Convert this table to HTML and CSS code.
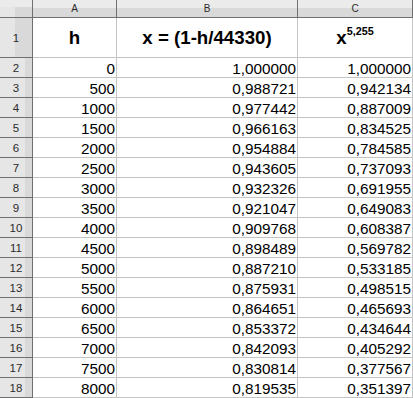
FILE: index.html
```html
<!DOCTYPE html>
<html lang="en">
<head>
  <meta charset="UTF-8" />
  <title>Barometric formula</title>
  <link rel="stylesheet" href="styles.css">
</head>
<body>
  <div class="sheet">
    <div class="corner"></div>
    <div class="col-head">A</div>
    <div class="col-head">B</div>
    <div class="col-head">C</div>

    <div class="row-head first">1</div>
    <div class="cell title">h</div>
    <div class="cell title">x = (1-h/44330)</div>
    <div class="cell title">x<sup>5,255</sup></div>

    <div class="row-head">2</div><div class="cell">0</div><div class="cell">1,000000</div><div class="cell">1,000000</div>
    <div class="row-head">3</div><div class="cell">500</div><div class="cell">0,988721</div><div class="cell">0,942134</div>
    <div class="row-head">4</div><div class="cell">1000</div><div class="cell">0,977442</div><div class="cell">0,887009</div>
    <div class="row-head">5</div><div class="cell">1500</div><div class="cell">0,966163</div><div class="cell">0,834525</div>
    <div class="row-head">6</div><div class="cell">2000</div><div class="cell">0,954884</div><div class="cell">0,784585</div>
    <div class="row-head">7</div><div class="cell">2500</div><div class="cell">0,943605</div><div class="cell">0,737093</div>
    <div class="row-head">8</div><div class="cell">3000</div><div class="cell">0,932326</div><div class="cell">0,691955</div>
    <div class="row-head">9</div><div class="cell">3500</div><div class="cell">0,921047</div><div class="cell">0,649083</div>
    <div class="row-head">10</div><div class="cell">4000</div><div class="cell">0,909768</div><div class="cell">0,608387</div>
    <div class="row-head">11</div><div class="cell">4500</div><div class="cell">0,898489</div><div class="cell">0,569782</div>
    <div class="row-head">12</div><div class="cell">5000</div><div class="cell">0,887210</div><div class="cell">0,533185</div>
    <div class="row-head">13</div><div class="cell">5500</div><div class="cell">0,875931</div><div class="cell">0,498515</div>
    <div class="row-head">14</div><div class="cell">6000</div><div class="cell">0,864651</div><div class="cell">0,465693</div>
    <div class="row-head">15</div><div class="cell">6500</div><div class="cell">0,853372</div><div class="cell">0,434644</div>
    <div class="row-head">16</div><div class="cell">7000</div><div class="cell">0,842093</div><div class="cell">0,405292</div>
    <div class="row-head">17</div><div class="cell">7500</div><div class="cell">0,830814</div><div class="cell">0,377567</div>
    <div class="row-head">18</div><div class="cell">8000</div><div class="cell">0,819535</div><div class="cell">0,351397</div>
  </div>
</body>
</html>
```

FILE: styles.css
```css
* {
  box-sizing: border-box;
  margin: 0;
  padding: 0;
}

body {
  background: #ffffff;
  font-family: 'Liberation Sans', Arial, sans-serif;
  overflow: hidden;
}

.sheet {
  display: grid;
  grid-template-columns: 33px 84px 181px 115px;
  grid-template-rows: 18px 40px repeat(17, 20px);
  width: 413px;
}

.corner,
.col-head,
.row-head {
  border-right: 1px solid #6f6f6f;
  border-bottom: 1px solid #6f6f6f;
  color: #2b2b2b;
  display: flex;
  align-items: center;
  justify-content: center;
}

.corner,
.col-head {
  background: linear-gradient(#ebebeb 0 8px, #d9d9d9 8px);
  font-size: 10px;
}

.corner {
  background: linear-gradient(#ebebeb 0 7px, transparent 7px),
              linear-gradient(to right, #e6e6e6 0 15px, #d8d8d8 15px);
}

.row-head {
  background: linear-gradient(to right, #e6e6e6 0 25px, #d9d9d9 25px);
  font-size: 11.5px;
}

.row-head.first {
  background: linear-gradient(to right, #e6e6e6 0 15px, #d9d9d9 15px);
}

.cell {
  border-right: 1px solid #c4c4c4;
  border-bottom: 1px solid #c4c4c4;
  color: #000000;
  font-size: 15.3px;
  line-height: 17px;
  padding: 2px 1px 0 0;
  text-align: right;
  white-space: nowrap;
}

.cell.title {
  padding: 0;
  font-size: 18.7px;
  font-weight: bold;
  line-height: 39px;
  text-align: center;
}

.cell.title sup {
  font-size: 10.8px;
  line-height: 0;
  vertical-align: 9px;
}
```
